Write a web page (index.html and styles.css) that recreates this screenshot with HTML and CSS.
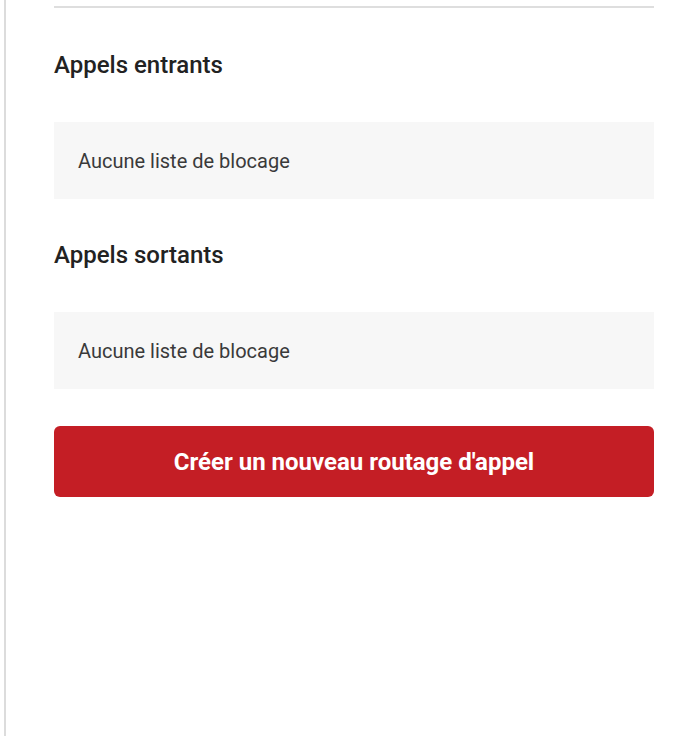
FILE: index.html
```html
<!DOCTYPE html>
<html lang="fr">
<head>
<meta charset="utf-8">
<title>Routage d'appel</title>
<link rel="stylesheet" href="styles.css">
</head>
<body>
<div class="panel">
  <div class="content">
    <hr class="divider">
    <section class="section">
      <h2 class="section-title">Appels entrants</h2>
      <div class="empty-box">Aucune liste de blocage</div>
    </section>
    <section class="section">
      <h2 class="section-title">Appels sortants</h2>
      <div class="empty-box">Aucune liste de blocage</div>
    </section>
    <button class="primary-btn" type="button">Créer un nouveau routage d'appel</button>
  </div>
</div>
</body>
</html>
```

FILE: styles.css
```css
html, body {
  margin: 0;
  padding: 0;
  background: #ffffff;
  font-family: Roboto, "Liberation Sans", Arial, sans-serif;
}

.panel {
  margin-left: 4px;
  border-left: 2px solid #dcdcdc;
  min-height: 736px;
  box-sizing: border-box;
}

.content {
  width: 600px;
  padding-left: 48px;
  padding-top: 6px;
}

.divider {
  margin: 0;
  border: 0;
  height: 2px;
  background: #dedede;
}

.section-title {
  margin: 0;
  padding: 43px 0 43px;
  font-size: 24px;
  line-height: 28px;
  font-weight: 500;
  color: #222222;
}

.section + .section .section-title {
  padding-top: 42px;
}

.empty-box {
  height: 77px;
  box-sizing: border-box;
  display: flex;
  align-items: center;
  padding-left: 24px;
  background: #f7f7f7;
  font-size: 20px;
  color: #3a3a3a;
}

.primary-btn {
  display: block;
  width: 100%;
  height: 71px;
  margin-top: 37px;
  border: 0;
  border-radius: 6px;
  background: #c41e25;
  color: #ffffff;
  font-family: Roboto, "Liberation Sans", Arial, sans-serif;
  font-size: 24px;
  font-weight: 700;
  cursor: pointer;
}
```
